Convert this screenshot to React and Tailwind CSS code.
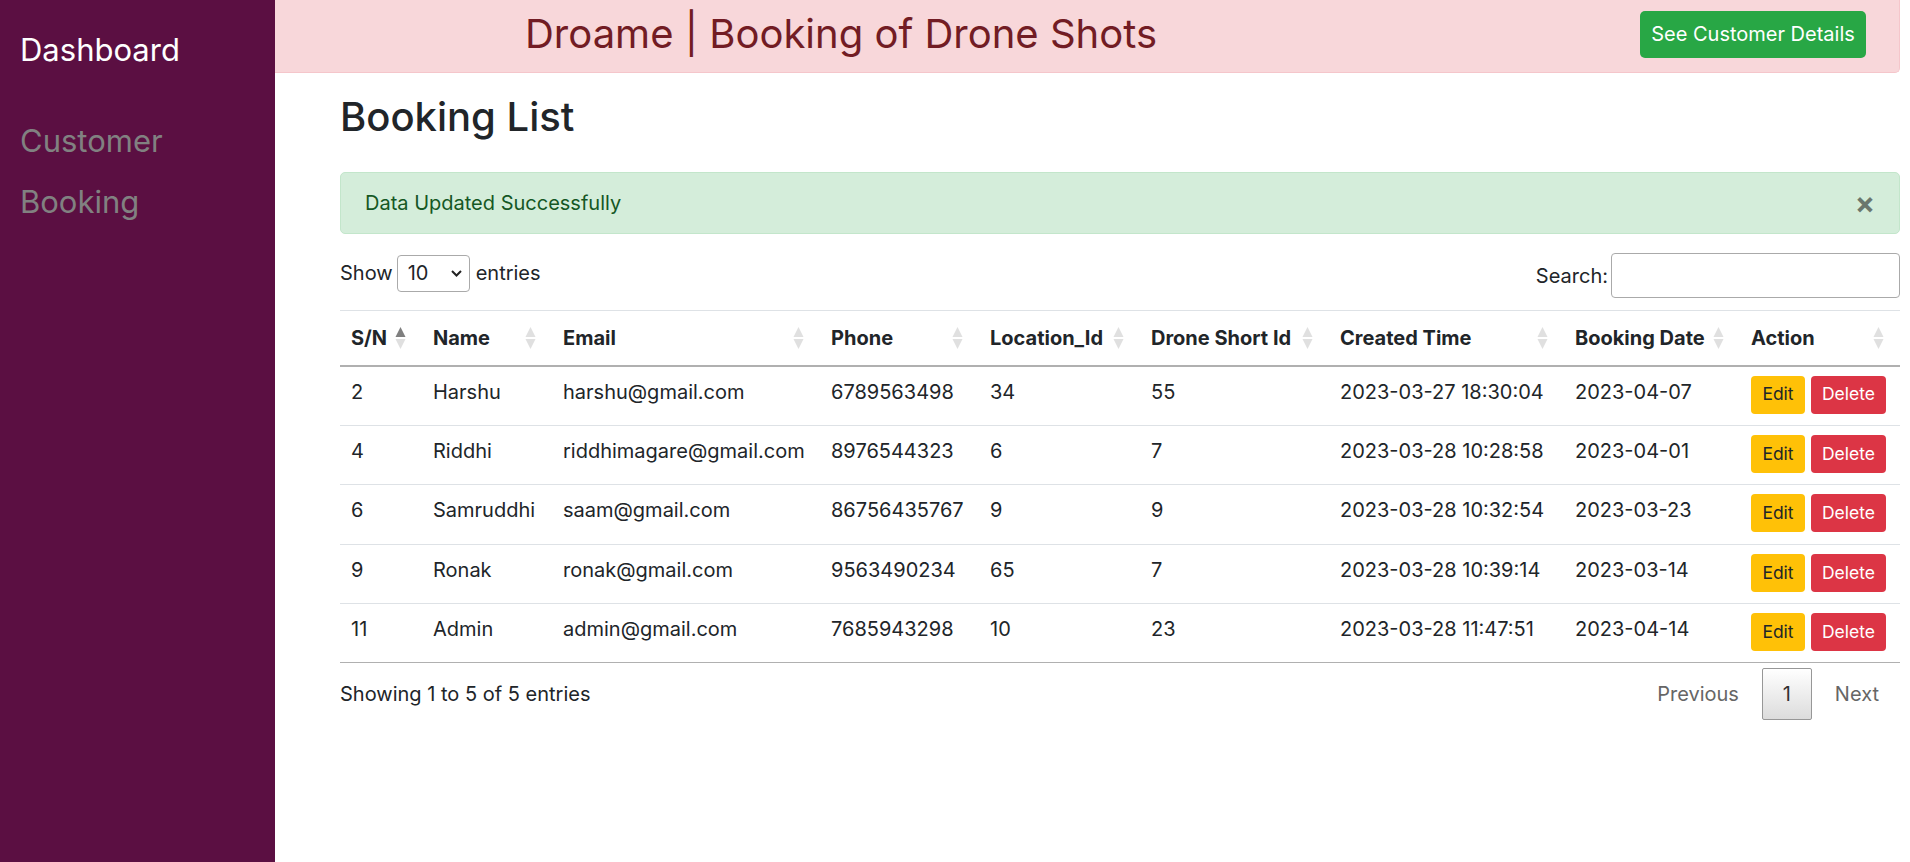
import React from 'react'

const columns = [
  { label: 'S/N', width: 82, active: true },
  { label: 'Name', width: 130 },
  { label: 'Email', width: 268 },
  { label: 'Phone', width: 159 },
  { label: 'Location_Id', width: 161 },
  { label: 'Drone Short Id', width: 189 },
  { label: 'Created Time', width: 235 },
  { label: 'Booking Date', width: 176 },
  { label: 'Action', width: 160 },
]

const bookings = [
  { id: 2, name: 'Harshu', email: 'harshu@gmail.com', phone: '6789563498', location: '34', drone: '55', created: '2023-03-27 18:30:04', date: '2023-04-07' },
  { id: 4, name: 'Riddhi', email: 'riddhimagare@gmail.com', phone: '8976544323', location: '6', drone: '7', created: '2023-03-28 10:28:58', date: '2023-04-01' },
  { id: 6, name: 'Samruddhi', email: 'saam@gmail.com', phone: '86756435767', location: '9', drone: '9', created: '2023-03-28 10:32:54', date: '2023-03-23' },
  { id: 9, name: 'Ronak', email: 'ronak@gmail.com', phone: '9563490234', location: '65', drone: '7', created: '2023-03-28 10:39:14', date: '2023-03-14' },
  { id: 11, name: 'Admin', email: 'admin@gmail.com', phone: '7685943298', location: '10', drone: '23', created: '2023-03-28 11:47:51', date: '2023-04-14' },
]

function SortIcon({ active }) {
  return (
    <svg width="11" height="22" viewBox="0 0 11 22" className="shrink-0">
      <polygon points="5.5,0 10.5,10 0.5,10" fill={active ? '#7f7f7f' : '#e0e0e0'} />
      <polygon points="0.5,12 10.5,12 5.5,22" fill="#e0e0e0" />
    </svg>
  )
}

function Sidebar() {
  return (
    <aside className="w-[275px] shrink-0 bg-[#5b0f42] pl-[20px] pt-[32px]">
      <div className="text-[31px] leading-[36px] text-white">Dashboard</div>
      <div className="mt-[55px] text-[31px] leading-[36px] text-[#818181]">Customer</div>
      <div className="mt-[25px] text-[31px] leading-[36px] text-[#818181]">Booking</div>
    </aside>
  )
}

export default function App() {
  return (
    <div className="flex min-h-screen bg-white font-[Inter,sans-serif] text-[20px] text-[#212529]">
      <Sidebar />

      <main className="flex-1 pr-[10px]">
        <header className="flex h-[73px] items-center justify-between rounded-br-[5px] border-r border-b border-[#f5c6cb] bg-[#f8d7da] pb-[4px] pl-[250px] pr-[33px]">
          <h1 className="text-[40px] leading-[48px] text-[#721c24]">Droame | Booking of Drone Shots</h1>
          <button className="flex h-[47px] w-[226px] items-center justify-center rounded-[5px] bg-[#28a745] text-[20px] leading-[30px] text-white">
            See Customer Details
          </button>
        </header>

        <div className="pl-[65px]">
          <h2 className="mt-[20px] text-[40px] leading-[48px] font-medium">Booking List</h2>

          <div className="mt-[31px] flex h-[62px] items-center justify-between rounded-[5px] border border-[#c3e6cb] bg-[#d4edda] pl-[24px] pr-[24px] text-[#155724]">
            <span className="leading-[30px]">Data Updated Successfully</span>
            <span className="text-[30px] font-bold leading-none text-black/50">×</span>
          </div>

          <div className="mt-[19px] flex h-[45px] items-center justify-between">
            <div className="flex items-center pb-[5px]">
              <span>Show</span>
              <div className="ml-[4px] flex h-[37px] w-[73px] items-center justify-between rounded-[4px] border border-[#aaa] pl-[10px] pr-[7px]">
                <span>10</span>
                <svg width="11" height="7" viewBox="0 0 11 7">
                  <path d="M1 1l4.5 4.5L10 1" fill="none" stroke="#222" strokeWidth="2" />
                </svg>
              </div>
              <span className="ml-[6px]">entries</span>
            </div>
            <div className="flex items-center">
              <span>Search:</span>
              <input className="ml-[3px] h-[45px] w-[289px] rounded-[4px] border border-[#aaa] px-2" />
            </div>
          </div>

          <table className="mt-[12px] w-full table-fixed border-collapse">
            <colgroup>
              {columns.map((c) => (
                <col key={c.label} style={{ width: c.width }} />
              ))}
            </colgroup>
            <thead>
              <tr>
                {columns.map((c) => (
                  <th
                    key={c.label}
                    className="h-[55px] border-t border-b-2 border-t-[#dee2e6] border-b-[#b0b0b0] pl-[11px] pr-[16px] text-left align-middle font-bold"
                  >
                    <div className="flex items-center justify-between">
                      <span className="whitespace-nowrap leading-[30px]">{c.label}</span>
                      <SortIcon active={c.active} />
                    </div>
                  </th>
                ))}
              </tr>
            </thead>
            <tbody>
              {bookings.map((b, i) => {
                const last = i === bookings.length - 1
                const cell = `px-[11px] pt-[10px] pb-[18.4px] align-top leading-[30px] whitespace-nowrap border-b ${last ? 'border-[#b0b0b0]' : 'border-[#dee2e6]'}`
                return (
                  <tr key={b.id}>
                    <td className={cell}>{b.id}</td>
                    <td className={cell}>{b.name}</td>
                    <td className={cell}>{b.email}</td>
                    <td className={cell}>{b.phone}</td>
                    <td className={cell}>{b.location}</td>
                    <td className={cell}>{b.drone}</td>
                    <td className={cell}>{b.created}</td>
                    <td className={cell}>{b.date}</td>
                    <td className={`border-b px-[11px] pt-[9px] pb-[11.4px] align-top ${last ? 'border-[#b0b0b0]' : 'border-[#dee2e6]'}`}>
                      <div className="flex gap-[6px]">
                        <button className="flex h-[38px] w-[54px] items-center justify-center rounded-[4px] bg-[#ffc107] text-[17.5px] text-[#212529]">
                          Edit
                        </button>
                        <button className="flex h-[38px] w-[75px] items-center justify-center rounded-[4px] bg-[#dc3545] text-[17.5px] text-white">
                          Delete
                        </button>
                      </div>
                    </td>
                  </tr>
                )
              })}
            </tbody>
          </table>

          <div className="mt-[5px] flex items-center justify-between">
            <span className="leading-[30px]">Showing 1 to 5 of 5 entries</span>
            <div className="flex items-center leading-[30px]">
              <span className="border border-transparent px-[20px] py-[10px] text-[#666]">Previous</span>
              <span className="ml-[2px] w-[50px] rounded-[2px] border border-[#979797] bg-linear-to-b from-white to-[#dcdcdc] py-[10px] text-center text-[#333]">
                1
              </span>
              <span className="ml-[2px] border border-transparent px-[20px] py-[10px] text-[#666]">Next</span>
            </div>
          </div>
        </div>
      </main>
    </div>
  )
}
